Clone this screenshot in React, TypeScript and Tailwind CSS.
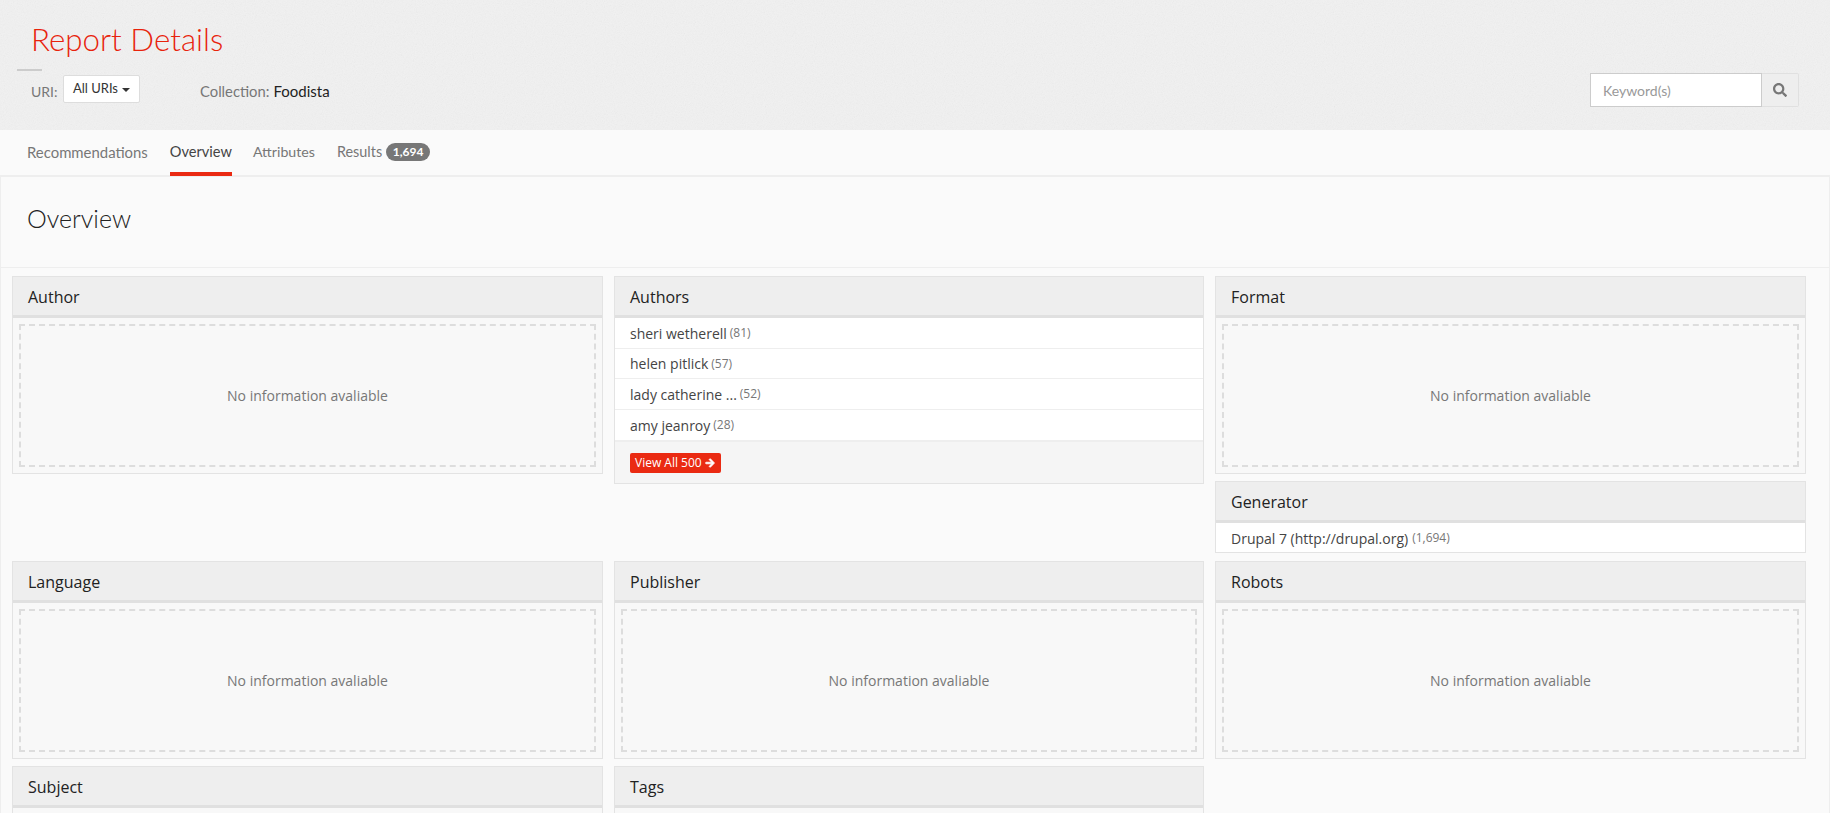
import type { ReactNode } from "react";
import { FaArrowRight, FaSearch } from "react-icons/fa";

function Panel({ title, children, className = "" }: { title: string; children?: ReactNode; className?: string }) {
  return (
    <div className={`border border-[#e3e3e3] bg-[#f8f8f8] ${className}`}>
      <div className="box-content flex h-[37px] items-center border-b-[3px] border-[#e0e0e0] bg-[#eeeeee] px-[15px] pt-[1px] text-[16px] text-[#222]">
        {title}
      </div>
      {children}
    </div>
  );
}

function NoInfo({ title }: { title: string }) {
  return (
    <Panel title={title} className="h-[198px]">
      <div className="p-[6px]">
        <div className="flex h-[143px] items-center justify-center border-2 border-dashed border-[#dddddd] text-[14px] text-[#777]">
          No information avaliable
        </div>
      </div>
    </Panel>
  );
}

function Row({ name, count, last }: { name: string; count: string; last?: boolean }) {
  return (
    <div className={`flex h-[30.5px] items-center bg-white px-[15px] pt-[1px] text-[14px] text-[#444] ${last ? "" : "border-b border-[#eeeeee]"}`}>
      {name}
      <span className="ml-[3px] text-[12px] text-[#777]">{count}</span>
    </div>
  );
}

export default function App() {
  return (
    <div className="h-[813px] w-full overflow-hidden bg-[#fafafa] font-['Open_Sans','Noto_Sans',sans-serif]">
      {/* header */}
      <div className="relative h-[130px] bg-[#f1f1f1] font-['Lato',sans-serif]">
        <svg className="absolute inset-0 h-full w-full opacity-[0.1]">
          <filter id="paper">
            <feTurbulence type="fractalNoise" baseFrequency="0.9" numOctaves="2" />
            <feColorMatrix type="saturate" values="0" />
          </filter>
          <rect width="100%" height="100%" filter="url(#paper)" />
        </svg>
        <div className="relative flex h-full flex-col">
          <h1 className="ml-[31px] mt-[19px] text-[31.3px] font-light leading-[40px] text-[#e8230c]">Report Details</h1>
          <div className="ml-[17px] mt-[10px] h-[2px] w-[25px] bg-[#cccccc]" />
          <div className="ml-[31px] mt-[4px] flex items-center">
            <span className="mt-[5px] w-[32px] text-[14px] text-[#777]">URI:</span>
            <button className="flex h-[28px] w-[77px] items-center justify-center rounded-[2px] border border-[#dddddd] bg-white text-[13px] text-[#333]">
              All URIs
              <span className="ml-[4px] mt-[1px] border-x-4 border-t-4 border-x-transparent border-t-[#333]" />
            </button>
            <span className="ml-[60px] mt-[5px] text-[14.8px] text-[#777]">Collection:</span>
            <span className="ml-[4px] mt-[5px] text-[15px] text-[#222]">Foodista</span>
          </div>
        </div>
        <div className="absolute left-[1590px] top-[73px] flex h-[34px]">
          <input
            placeholder="Keyword(s)"
            className="h-full w-[172px] border border-[#cccccc] bg-white px-[12px] text-[14px] outline-none placeholder:text-[#999]"
          />
          <div className="flex h-full w-[37px] items-center justify-center rounded-r-[2px] border border-l-0 border-[#e0e0e0] bg-[#eeeeee] text-[#777]">
            <FaSearch size={14} />
          </div>
        </div>
      </div>

      {/* tabs */}
      <div className="flex h-[47px] items-start border-b-2 border-[#eeeeee] bg-[#fafafa] pl-[27px] font-['Lato',sans-serif] text-[14.2px] text-[#777]">
        <a className="mr-[22px] flex h-[46px] items-center pb-[2px] text-[14.9px]">Recommendations</a>
        <a className="mr-[21px] flex h-[46px] items-center border-b-4 border-[#ea2a12] pt-[2px] text-[14.6px] text-[#444]">Overview</a>
        <a className="mr-[22px] flex h-[46px] items-center pb-[2px]">Attributes</a>
        <a className="flex h-[46px] items-center pb-[2px] text-[14.4px]">
          Results
          <span className="ml-[4px] flex h-[18px] w-[44px] items-center justify-center rounded-full bg-[#777] text-[12px] font-bold text-white">1,694</span>
        </a>
      </div>

      {/* main */}
      <div className="border-x border-[#eeeeee]">
        <div className="flex h-[91px] items-center border-b border-[#eeeeee] pb-[6px] pl-[26px] font-['Lato',sans-serif] text-[25px] font-light text-[#222]">
          Overview
        </div>
        <div className="grid grid-cols-[591px_590px_591px] grid-rows-[277px_197px_60px] gap-x-[11px] gap-y-[8px] pl-[11px] pt-[8px]">
          <NoInfo title="Author" />
          <div>
            <Panel title="Authors" className="h-[208px]">
              <Row name="sheri wetherell" count="(81)" />
              <Row name="helen pitlick" count="(57)" />
              <Row name="lady catherine ..." count="(52)" />
              <Row name="amy jeanroy" count="(28)" last />
              <div className="flex h-[43px] items-center border-t-2 border-[#eeeeee] bg-[#f5f5f5] px-[15px]">
                <button className="flex h-[20px] w-[91px] items-center gap-[3px] rounded-[2px] bg-[#ea2a12] pl-[5px] text-[12px] text-white">
                  View All 500 <FaArrowRight size={10} className="stroke-[40]" />
                </button>
              </div>
            </Panel>
          </div>
          <div className="flex flex-col gap-[7px]">
            <NoInfo title="Format" />
            <Panel title="Generator">
              <div className="flex h-[29px] items-center bg-white px-[15px] pt-[1px] text-[14px] text-[#444]">
                Drupal 7 (http://drupal.org)
                <span className="ml-[4px] text-[12px] text-[#777]">(1,694)</span>
              </div>
            </Panel>
          </div>
          <NoInfo title="Language" />
          <NoInfo title="Publisher" />
          <NoInfo title="Robots" />
          <Panel title="Subject" className="h-[60px]" />
          <Panel title="Tags" className="h-[60px]" />
        </div>
      </div>
    </div>
  );
}
